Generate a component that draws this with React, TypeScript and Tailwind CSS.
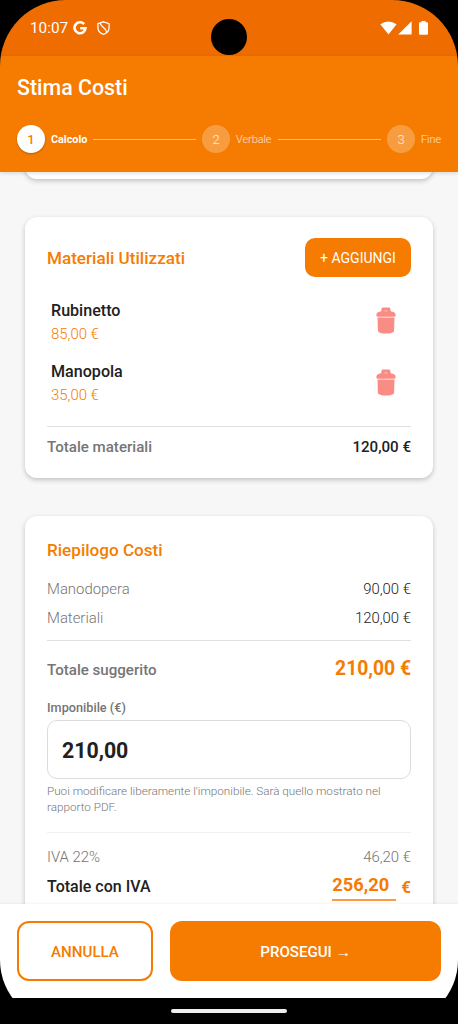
import { Fragment } from "react";

const steps = [
  { n: 1, label: "Calcolo", width: "w-[36px]" },
  { n: 2, label: "Verbale", width: "w-[36px]" },
  { n: 3, label: "Fine", width: "w-[20px]" },
];

const materials = [
  { name: "Rubinetto", price: "85,00 €" },
  { name: "Manopola", price: "35,00 €" },
];

function TrashIcon() {
  return (
    <svg width="20" height="27" viewBox="0 0 20 27" fill="#fa8c86">
      <path d="M5 5 L5.6 1.4 Q5.8 .4 6.8 .4 H13 Q14 .4 14.2 1.4 L14.8 4.2 Q19 4.8 19.6 7.2 V8.4 Q19.6 9.6 17.8 9.8 H2.2 Q.4 9.6 .4 8.4 V7.2 Q1 4.8 5 4.2 Z" />
      <path d="M8.6 4.2 Q9.9 3 11.2 4.2" fill="none" stroke="#fff" strokeWidth=".7" opacity=".8" />
      <path d="M1.5 10.6 H18.5 L18.1 23.8 Q18 26.6 10 26.6 Q2.2 26.6 1.9 23.8 Z" />
    </svg>
  );
}

function StatusBar() {
  return (
    <div className="relative flex h-14 shrink-0 items-center justify-between bg-[#ef6c00] pl-[30px] pr-[30px] text-white">
      <div className="flex items-center">
        <span className="w-[43px] whitespace-nowrap text-[15.3px] leading-5">10:07</span>
        <svg width="14" height="14" viewBox="0 0 14 14" fill="none" stroke="#fff" strokeWidth="2.6">
          <path d="M11.2 3.2 A5.5 5.5 0 1 0 12.5 7.2 H7.2" />
        </svg>
        <svg className="ml-[10px]" width="13" height="14" viewBox="0 0 13 14" fill="none" stroke="#fff" strokeWidth="1.3">
          <path d="M6.5 .8 L12.1 2.7 V6.5 C12.1 10 9.8 12.3 6.5 13.3 C3.2 12.3 .9 10 .9 6.5 V2.7 Z" />
          <path d="M3.2 2 C3.4 6.4 9.4 6 9.8 11.4" />
        </svg>
      </div>
      <div className="absolute left-[211px] top-[18.5px] size-9 rounded-full bg-black" />
      <div className="flex items-center">
        <svg width="17" height="14" viewBox="0 0 17 14" fill="#fff">
          <path d="M.3 3.2 Q8.3 -2.4 16.6 3.2 L8.5 13.6 Z" />
        </svg>
        <svg className="ml-[1px]" width="14" height="14" viewBox="0 0 14 14" fill="#fff">
          <path d="M13.6 .2 V13.6 H.2 Z" />
        </svg>
        <svg className="ml-[7px]" width="9" height="14" viewBox="0 0 9 14" fill="#fff">
          <path d="M2.5 1.2 V0 H6.5 V1.2 H7.8 Q9 1.2 9 2.4 V12.6 Q9 13.8 7.8 13.8 H1.2 Q0 13.8 0 12.6 V2.4 Q0 1.2 1.2 1.2 Z" />
        </svg>
      </div>
    </div>
  );
}

function Header() {
  return (
    <header className="relative z-10 flex h-[116px] shrink-0 flex-col bg-[#f57c00] px-[17px] pt-[17px] text-white shadow-[0_1px_4px_rgba(0,0,0,0.15)]">
      <h1 className="h-7 pt-px text-[21.4px] font-medium leading-7">Stima Costi</h1>
      <div className="mt-6 flex items-center">
        {steps.map((s, i) => (
          <Fragment key={s.n}>
            <div
              className={
                s.n === 1
                  ? "flex size-7 shrink-0 items-center justify-center rounded-full bg-white pt-px text-[13px] font-medium text-[#f57c00] shadow-[0_1px_2px_rgba(0,0,0,0.25)]"
                  : "flex size-7 shrink-0 items-center justify-center rounded-full bg-white/25 pt-px text-[13px] font-light text-white/80"
              }
            >
              {s.n}
            </div>
            <span
              className={`ml-[6px] shrink-0 whitespace-nowrap pt-px text-[10.8px] leading-4 ${s.width} ${
                s.n === 1 ? "font-bold text-white" : "font-light text-white/80"
              }`}
            >
              {s.label}
            </span>
            {i < 2 && <div className="mx-1.5 h-px flex-1 bg-white/50" />}
          </Fragment>
        ))}
      </div>
    </header>
  );
}

const card = "rounded-xl bg-white px-[22px] shadow-[0_2px_5px_rgba(0,0,0,0.22)]";

export default function App() {
  return (
    <div className="h-[1024px] w-[458px] bg-black font-['Roboto',sans-serif] text-[14.9px] text-[#212121]">
      <div className="flex h-full flex-col overflow-hidden rounded-t-[66px] rounded-b-[64px]">
        <StatusBar />
        <Header />
        <main className="flex min-h-0 flex-1 flex-col overflow-hidden bg-[#f7f7f7] px-[25px]">
          <div className={`${card} -mt-5 h-[27px] shrink-0`} />

          <section className={`${card} mt-[38px] h-[261px] shrink-0 pt-[21px]`}>
            <div className="flex h-[39px] items-center justify-between">
              <h2 className="pt-[2px] text-[17.1px] font-medium text-[#f57c00]">Materiali Utilizzati</h2>
              <button className="h-[39px] w-[106px] rounded-[10px] bg-[#f57c00] pt-[2px] text-[14px] text-white">+ AGGIUNGI</button>
            </div>
            <ul className="mt-[13px]">
              {materials.map((m) => (
                <li key={m.name} className="flex h-[61.5px] items-center justify-between pl-1 pr-[15px]">
                  <div className="pt-[3.4px]">
                    <div className="h-6 text-[16.1px] font-medium leading-6">{m.name}</div>
                    <div className="h-[23px] font-light leading-[23px] text-[#f57c00]">{m.price}</div>
                  </div>
                  <TrashIcon />
                </li>
              ))}
            </ul>
            <div className="mt-[13px] flex items-center justify-between border-t border-[#e0e0e0] pt-[10px] text-[15.1px] font-medium leading-5">
              <span className="text-[#757575]">Totale materiali</span>
              <span>120,00 €</span>
            </div>
          </section>

          <section className={`${card} mt-[38px] h-[420px] shrink-0 pt-[22px]`}>
            <h2 className="text-[17.1px] font-medium leading-6 text-[#f57c00]">Riepilogo Costi</h2>
            <div className="mt-[13px] flex h-[29px] items-center justify-between font-light">
              <span className="text-[#757575]">Manodopera</span>
              <span>90,00 €</span>
            </div>
            <div className="flex h-[29px] items-center justify-between font-light">
              <span className="text-[#757575]">Materiali</span>
              <span>120,00 €</span>
            </div>
            <div className="mt-[7px] flex h-[57px] items-center justify-between border-t border-[#e0e0e0] font-medium">
              <span className="pt-[3px] text-[15.1px] text-[#757575]">Totale suggerito</span>
              <span className="pt-px text-[19.3px] font-bold text-[#f57c00]">210,00 €</span>
            </div>
            <div className="mt-[2px] text-[12.7px] font-medium leading-[17px] text-[#757575]">Imponibile (€)</div>
            <div className="mt-1 flex h-[59px] items-center rounded-[10px] border border-[#dcdcdc] px-[14px] pt-[2px] text-[21.3px] font-bold">210,00</div>
            <p className="mt-1 text-[11.7px] font-light leading-4 text-[#757575]">
              Puoi modificare liberamente l&apos;imponibile. Sarà quello mostrato nel
              <br />
              rapporto PDF.
            </p>
            <div className="mt-[17px] flex h-[39px] items-center justify-between border-t border-[#f0f0f0] pt-[10px] font-light text-[#757575]">
              <span>IVA 22%</span>
              <span>46,20 €</span>
            </div>
            <div className="flex h-[30px] items-center justify-between font-medium">
              <span className="pt-[2px] text-[16px]">Totale con IVA</span>
              <div className="flex items-center text-[18.3px] font-bold text-[#f57c00]">
                <div className="w-[64px]">
                  <div className="h-[28px] leading-[28px]">256,20</div>
                  <div className="h-0.5 bg-[#f57c00]/75" />
                </div>
                <span className="ml-[5px] pt-[4px] text-[17px]">€</span>
              </div>
            </div>
          </section>
        </main>

        <footer className="relative z-10 flex h-[94px] shrink-0 gap-[17px] bg-white px-[17px] pt-[17px] shadow-[0_-1px_2px_rgba(0,0,0,0.05)]">
          <button className="h-[60px] w-[136px] rounded-xl border-2 border-[#f57c00] pt-[2px] text-[15.1px] font-medium text-[#f57c00]">ANNULLA</button>
          <button className="h-[60px] flex-1 rounded-xl bg-[#f57c00] pt-[2px] text-[15.1px] font-medium text-white">PROSEGUI →</button>
        </footer>
        <nav className="relative z-10 flex h-[26px] shrink-0 items-center justify-center bg-black">
          <div className="h-1 w-[116px] rounded-full bg-[#eeeeee]" />
        </nav>
      </div>
    </div>
  );
}
